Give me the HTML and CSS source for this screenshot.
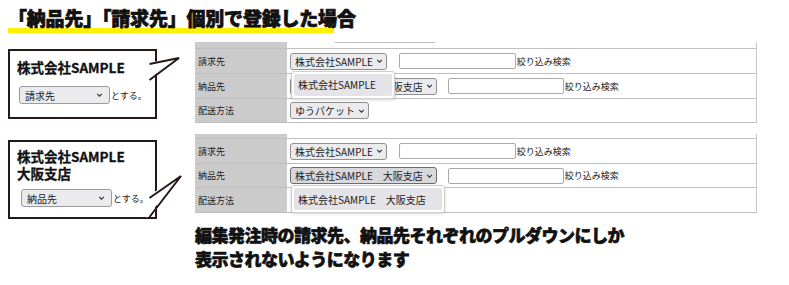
FILE: index.html
```html
<!DOCTYPE html>
<html lang="ja">
<head>
    <meta charset="UTF-8">
    <meta name="viewport" content="width=device-width, initial-scale=1.0">
    <title>個別で登録した場合</title>
    <link rel="stylesheet" href="styles.css">
</head>
<body>
    <h1 class="heading">「納品先」「請求先」個別で登録した場合</h1>

    <section class="case case-one">
        <div class="side">
            <div class="bubble bubble-one">
                <div class="bubble-name">株式会社SAMPLE</div>
                <div class="bubble-line">
                    <span class="pick wide">請求先<svg class="chev" viewBox="0 0 8 5" width="7" height="4"><path d="M1 1l3 3 3-3"/></svg></span>
                    <span class="suffix">とする。</span>
                </div>
                <svg class="tail tail-one" width="40" height="40" viewBox="0 0 40 40">
                    <polygon points="0,16 33,11 0,34" fill="#fff"/>
                    <polyline points="3.5,17 33,11 3.5,33"/>
                </svg>
            </div>
        </div>
        <div class="sheet sheet-one">
            <div class="label"></div>
            <div class="value"><span class="stub-line"></span></div>

            <div class="label">請求先</div>
            <div class="value">
                <span class="pick-wrap">
                    <span class="pick">株式会社SAMPLE<svg class="chev" viewBox="0 0 8 5" width="7" height="4"><path d="M1 1l3 3 3-3"/></svg></span>
                    <span class="menu"><span class="option">株式会社SAMPLE</span></span>
                </span>
                <span class="field"></span><span class="hint">絞り込み検索</span>
            </div>

            <div class="label">納品先</div>
            <div class="value">
                <span class="pick">株式会社SAMPLE　大阪支店<svg class="chev" viewBox="0 0 8 5" width="7" height="4"><path d="M1 1l3 3 3-3"/></svg></span>
                <span class="field field-short"></span><span class="hint">絞り込み検索</span>
            </div>

            <div class="label">配送方法</div>
            <div class="value">
                <span class="pick">ゆうパケット<svg class="chev" viewBox="0 0 8 5" width="7" height="4"><path d="M1 1l3 3 3-3"/></svg></span>
            </div>
        </div>
    </section>

    <section class="case case-two">
        <div class="side">
            <div class="bubble bubble-two">
                <div class="bubble-name">株式会社SAMPLE<br>大阪支店</div>
                <div class="bubble-line">
                    <span class="pick wide">納品先<svg class="chev" viewBox="0 0 8 5" width="7" height="4"><path d="M1 1l3 3 3-3"/></svg></span>
                    <span class="suffix">とする。</span>
                </div>
                <svg class="tail tail-two" width="40" height="50" viewBox="0 0 40 50">
                    <polygon points="0,25 35,4 0,46" fill="#fff"/>
                    <polyline points="3.5,26 35,4 3.5,45"/>
                </svg>
            </div>
        </div>
        <div class="sheet sheet-two">
            <div class="label"></div>
            <div class="value"></div>

            <div class="label">請求先</div>
            <div class="value">
                <span class="pick">株式会社SAMPLE<svg class="chev" viewBox="0 0 8 5" width="7" height="4"><path d="M1 1l3 3 3-3"/></svg></span>
                <span class="field"></span><span class="hint">絞り込み検索</span>
            </div>

            <div class="label">納品先</div>
            <div class="value">
                <span class="pick-wrap">
                    <span class="pick is-open">株式会社SAMPLE　大阪支店<svg class="chev" viewBox="0 0 8 5" width="7" height="4"><path d="M1 1l3 3 3-3"/></svg></span>
                    <span class="menu"><span class="option">株式会社SAMPLE　大阪支店</span></span>
                </span>
                <span class="field field-short"></span><span class="hint">絞り込み検索</span>
            </div>

            <div class="label">配送方法</div>
            <div class="value"></div>
        </div>
    </section>

    <p class="note">編集発注時の請求先、納品先それぞれのプルダウンにしか<br>表示されないようになります</p>
</body>
</html>
```

FILE: styles.css
```css
* {
    box-sizing: border-box;
}
body {
    margin: 0;
    width: 789px;
    height: 285px;
    overflow: hidden;
    background: #fff;
    color: #1a1a1a;
    font-family: "Noto Sans CJK JP", "Noto Sans", sans-serif;
}
.heading {
    display: block;
    width: max-content;
    margin: 0 0 0 8px;
    padding: 6px 0 3px;
    font-size: 19px;
    line-height: 24px;
    font-weight: 900;
    letter-spacing: -0.2px;
    color: #111;
    -webkit-text-stroke: 0.7px #111;
    background: linear-gradient(#fff100, #fff100) left bottom / 326px 5px no-repeat;
}
.case {
    display: flex;
    align-items: flex-start;
}
.case-one {
    margin-top: 9px;
}
.case-two {
    margin-top: 11px;
}
.side {
    width: 195px;
    padding-left: 8px;
}
.case-one .side {
    padding-top: 7px;
}
.case-two .side {
    padding-top: 6px;
}
.bubble {
    position: relative;
    width: 149px;
    border: 2px solid #231815;
    background: #fff;
    padding-left: 7px;
}
.bubble-one {
    padding-top: 8px;
    padding-bottom: 13px;
}
.bubble-two {
    padding-top: 6px;
    padding-bottom: 10px;
}
.bubble-name {
    font-size: 13.5px;
    line-height: 17px;
    font-weight: 700;
    color: #111;
    -webkit-text-stroke: 0.3px #111;
}
.bubble-line {
    display: flex;
    align-items: center;
    gap: 1px;
    margin-left: 2px;
}
.bubble-one .bubble-line {
    margin-top: 10px;
}
.bubble-two .bubble-line {
    margin-top: 7px;
    margin-left: 4px;
}
.suffix {
    font-size: 9px;
    color: #222;
    white-space: nowrap;
}
.tail {
    position: absolute;
    left: 136px;
    overflow: visible;
}
.tail polyline {
    fill: none;
    stroke: #231815;
    stroke-width: 2;
}
.tail-one {
    top: -4px;
}
.tail-two {
    top: 30px;
}
.sheet {
    width: 562px;
    display: grid;
    grid-template-columns: 92px 1fr;
    border-right: 1px solid #c8c8c8;
    font-size: 9px;
    color: #222;
}
.sheet-one {
    grid-template-rows: 7px 25px 25px 24px;
}
.sheet-two {
    grid-template-rows: 5px 25px 24px 25px;
}
.sheet > div {
    display: flex;
    align-items: center;
    border-bottom: 1px solid #c0c0c0;
}
.label {
    background: #cbcbcb;
    padding-left: 3px;
}
.value {
    padding-left: 3px;
}
.stub-line {
    align-self: flex-start;
    width: 100px;
    height: 1px;
    margin-left: 45px;
    background: #bdbdbd;
}
.pick-wrap {
    position: relative;
    display: inline-flex;
}
.pick {
    display: inline-flex;
    align-items: center;
    gap: 3px;
    height: 17px;
    padding: 0 3px 0 4px;
    border: 1px solid #8f8f95;
    border-radius: 3px;
    background: #ebebee;
    font-size: 10px;
    color: #222;
    white-space: nowrap;
}
.pick.wide {
    width: 91px;
    height: 18px;
    justify-content: space-between;
    padding: 0 6px 0 5px;
    border-color: #9a9aa0;
}
.pick.is-open {
    background: #d8d8dc;
    border-color: #6d6d72;
}
.chev {
    flex: none;
}
.chev path {
    fill: none;
    stroke: #333;
    stroke-width: 1.3;
}
.field {
    width: 117px;
    height: 16px;
    margin-left: 12px;
    border: 1px solid #a9a9a9;
    border-radius: 2px;
    background: #fff;
}
.field-short {
    width: 116px;
    margin-left: 11px;
}
.hint {
    margin-left: 1px;
}
.menu {
    position: absolute;
    left: 1px;
    top: calc(100% + 1px);
    z-index: 2;
    padding: 2px;
    background: #fff;
    border: 1px solid #cfcfcf;
    border-radius: 3px;
    box-shadow: 0 1px 3px rgba(0, 0, 0, 0.18);
}
.option {
    display: flex;
    align-items: center;
    height: 22px;
    padding: 0 16px 0 4px;
    background: #e3e3e8;
    border-radius: 2px;
    font-size: 10px;
    white-space: nowrap;
}
.note {
    margin: 4px 0 0 195px;
    font-size: 17px;
    line-height: 24px;
    font-weight: 900;
    letter-spacing: -0.5px;
    color: #111;
    -webkit-text-stroke: 0.6px #111;
}
```
